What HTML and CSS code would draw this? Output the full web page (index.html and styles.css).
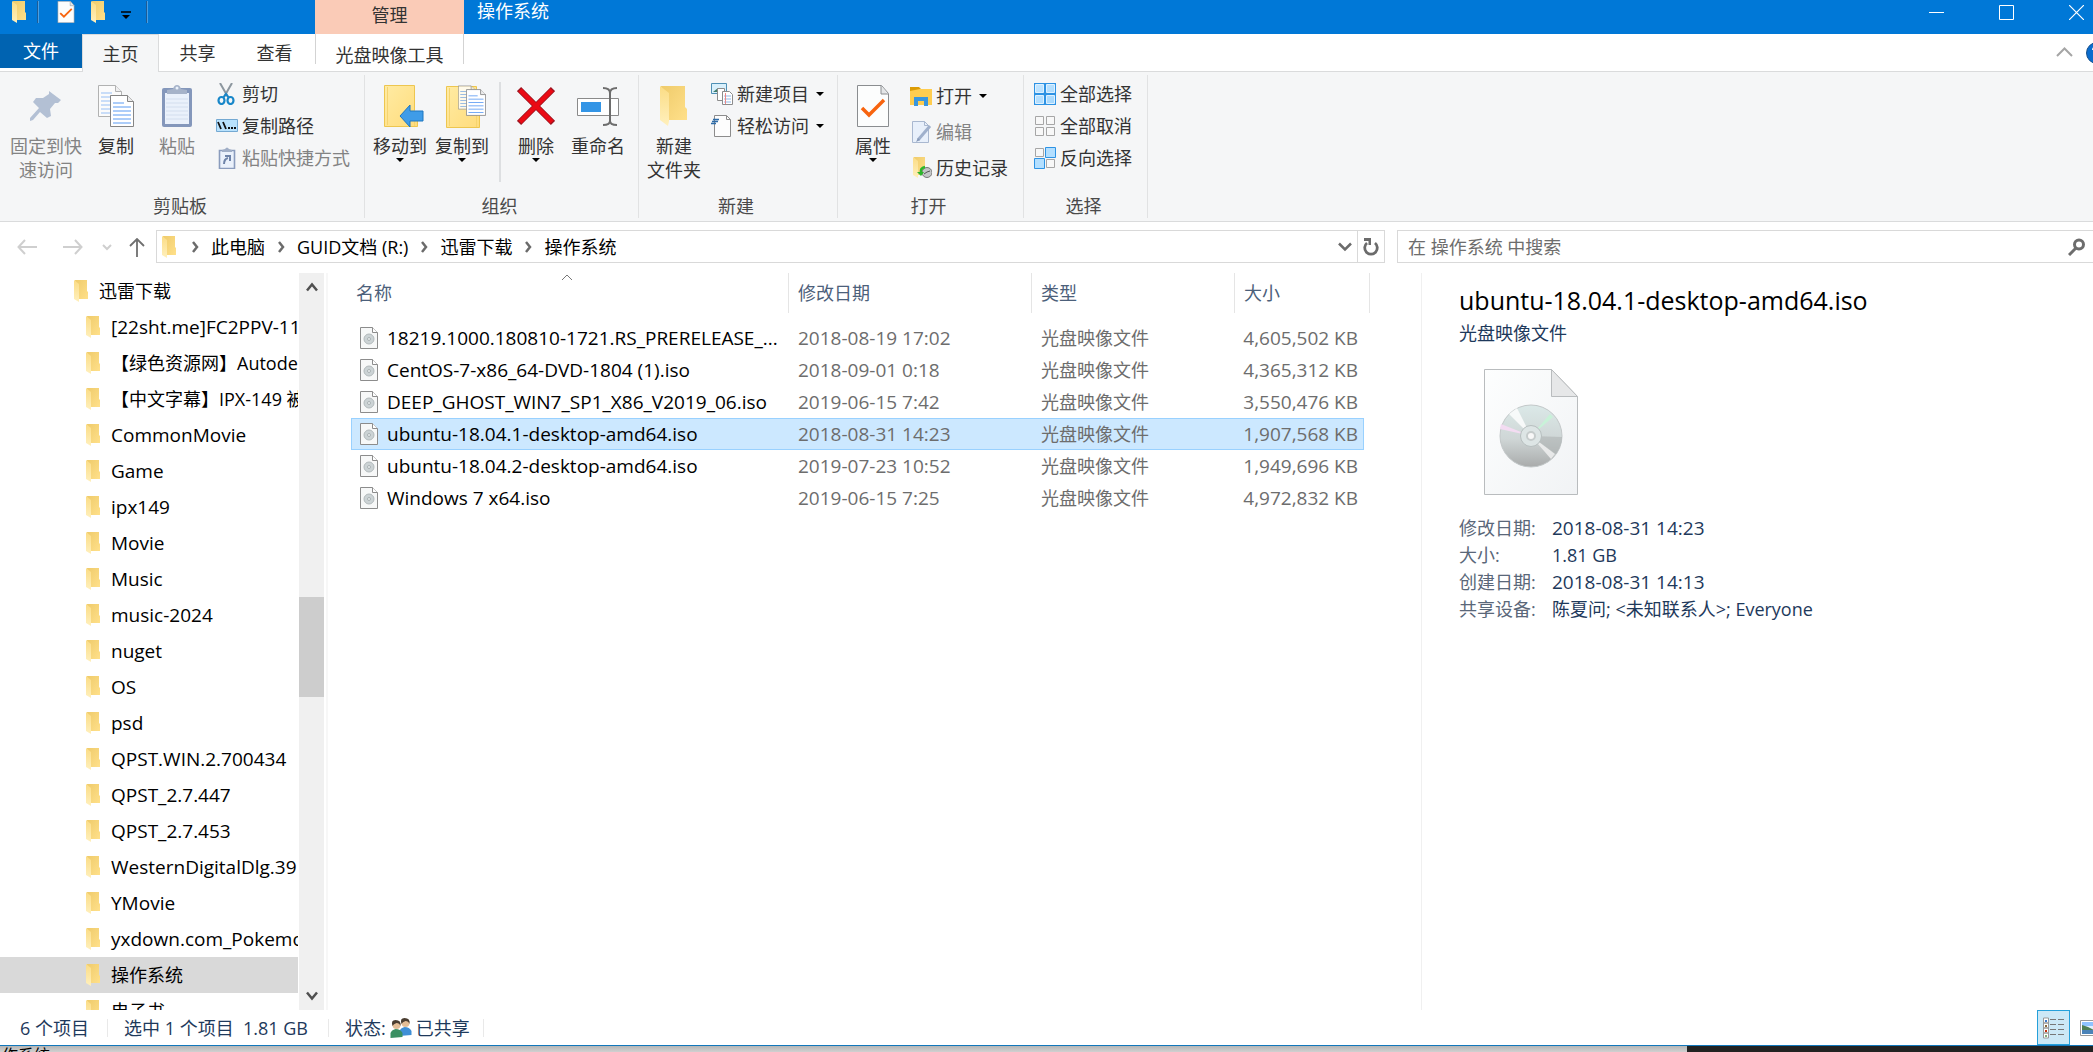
FILE: index.html
```html
<!DOCTYPE html>
<html lang="zh-CN">
<head>
<meta charset="utf-8">
<title>操作系统</title>
<link rel="stylesheet" href="styles.css">
</head>
<body>
<svg class="sprite" aria-hidden="true">
  <defs>
    <linearGradient id="g-back" x1="0" y1="0" x2="1" y2="1"><stop offset="0" stop-color="#efcb6b"/><stop offset="1" stop-color="#ffe08a"/></linearGradient>
    <linearGradient id="g-flap" x1="0" y1="0" x2="0" y2="1"><stop offset="0" stop-color="#fbdc85"/><stop offset="1" stop-color="#fff0bd"/></linearGradient>
    <linearGradient id="g-fold" x1="0" y1="0" x2="1" y2="1"><stop offset="0" stop-color="#ffeba3"/><stop offset="1" stop-color="#ffdc7c"/></linearGradient>
    <linearGradient id="g-page" x1="0" y1="0" x2="1" y2="1"><stop offset="0" stop-color="#fdfefe"/><stop offset="1" stop-color="#f1f3f5"/></linearGradient>
    <linearGradient id="g-disc" x1="0" y1="0" x2="0" y2="1"><stop offset="0" stop-color="#dbe9e8"/><stop offset=".55" stop-color="#cfd6d6"/><stop offset="1" stop-color="#a9abab"/></linearGradient>
    <linearGradient id="g-blue" x1="0" y1="0" x2="1" y2="1"><stop offset="0" stop-color="#c4e6ff"/><stop offset="1" stop-color="#a3d7fd"/></linearGradient>
  </defs>
  <symbol id="folder" viewBox="0 0 14 22"><path d="M1 0h12v11l1 1v7H3z" fill="url(#g-back)"/><path d="M0 0l5 4v18l-5-3z" fill="url(#g-flap)"/></symbol>
  <symbol id="iso" viewBox="0 0 18 22"><path d="M.5.5h12l5 5v16H.5z" fill="#f7f8f8" stroke="#8c8c8c"/><path d="M12.500.5v5h5" fill="#fff" stroke="#8c8c8c"/><circle cx="9" cy="12" r="5" fill="#ccd3d5" stroke="#b3babc"/><circle cx="9" cy="12" r="1.500" fill="#eef1f2" stroke="#aab2b4"/></symbol>
  <symbol id="checkdoc" viewBox="0 0 32 42"><path d="M.5.5h24l7 8v33H.5z" fill="#fcfdfd" stroke="#8a8d90"/><path d="M24 1v8h7" fill="#e4e6e8" stroke="#8a8d90"/><path d="M5 23l7 7L27 15" fill="none" stroke="#f7640f" stroke-width="3.500"/></symbol>
  <symbol id="page" viewBox="0 0 24 32"><path d="M.5.5h17l6 6v25H.5z" fill="#fff" stroke="#858585"/><path d="M17.500.5v6h6" fill="#ececec" stroke="#858585"/><path d="M3 8h11M3 12h18M3 16h18M3 20h18M3 24h18M3 28h18" stroke="#5b9bf3" stroke-width="1"/></symbol>
  <symbol id="pages" viewBox="0 0 36 42"><use href="#page" width="24" height="32" opacity=".6"/><use href="#page" x="12" y="10" width="24" height="32"/></symbol>
  <symbol id="bigfolder" viewBox="0 0 34 42"><path d="M.5.5h30v25l3 3v13H.5z" fill="url(#g-fold)" stroke="#edc650"/><path d="M3.500 2v38M30.500 25v16" stroke="#f5d470" fill="none"/></symbol>
  <symbol id="chev" viewBox="0 0 8 12"><path d="M2 1l4 5-4 5" fill="none" stroke="#6b6b6b" stroke-width="2.500"/></symbol>
  <symbol id="person" viewBox="0 0 12 18"><path d="M0 18v-5q1-3 5-4 5 0 7 4v4z"/><circle cx="6" cy="5" r="4" fill="#e3bd96"/><path d="M2 6Q0 0 5 0q6 0 5 6-1-3-4-3-3 1-4 3z" fill="#4a3d30"/></symbol>
</svg>

<div class="window">
  <header class="titlebar">
    <div class="quick">
      <svg class="i-folder"><use href="#folder"/></svg>
      <span class="qsep"></span>
      <button class="plain q-prop" aria-label="属性"><svg class="i-iso"><use href="#checkdoc"/></svg></button>
      <button class="plain q-new" aria-label="新建文件夹"><svg class="i-folder"><use href="#folder"/></svg></button>
      <button class="plain q-more" aria-label="自定义快速访问工具栏"><svg width="10" height="8" viewBox="0 0 10 8"><path d="M0 1h10" stroke="#000" stroke-width="1.500"/><path d="M1 4h8L5 8z"/></svg></button>
      <span class="qsep"></span>
    </div>
    <div class="context-title">管理</div>
    <h1 class="caption">操作系统</h1>
    <div class="controls">
      <button class="plain" aria-label="最小化"><svg width="15" height="15"><path d="M0 7.500h15" stroke="#fff"/></svg></button>
      <button class="plain" aria-label="最大化"><svg width="15" height="15"><path d="M.5.5h14v14H.5z" fill="none" stroke="#fff"/></svg></button>
      <button class="plain" aria-label="关闭"><svg width="15" height="15"><path d="M0 0l15 15M15 0L0 15" stroke="#fff" stroke-width="1.200"/></svg></button>
    </div>
  </header>

  <nav class="tabs">
    <button class="tab file">文件</button>
    <button class="tab active">主页</button>
    <button class="tab">共享</button>
    <button class="tab">查看</button>
    <button class="tab context">光盘映像工具</button>
    <span class="grow"></span>
    <button class="plain collapse" aria-label="最小化功能区"><svg width="17" height="10" viewBox="0 0 17 10"><path d="M1 9l7.500-7.500L16 9" fill="none" stroke="#a5a5a5" stroke-width="2"/></svg></button>
    <button class="plain help" aria-label="帮助"><svg width="22" height="22"><circle cx="11" cy="11" r="10.500" fill="#0a6cce" stroke="#17508c"/><path d="M7 8q0-3 4-3t4 3q0 2-4 4v2" fill="none" stroke="#fff" stroke-width="2"/></svg></button>
  </nav>

  <section class="ribbon">
    <div class="group g-clip">
      <div class="tools">
        <button class="big pin" disabled><svg width="36" height="42" viewBox="0 0 36 42"><path d="M21 6l12 9-3 3-3 0-5 6 1 7-4 2-7-6L5 35l-3 1 0-3 9-10-6-6 3-4 7 0 6-4z" fill="#b3c0d4"/></svg><span>固定到快<br>速访问</span></button>
        <button class="big copy"><svg width="36" height="42"><use href="#pages"/></svg><span>复制</span></button>
        <button class="big paste" disabled><svg width="30" height="42" viewBox="0 0 30 42"><rect y="3" width="30" height="39" rx="2" fill="#8497bb"/><path d="M3 8h24v31H3z" fill="#eaf1fb"/><path d="M4 14h22M4 18h22M4 22h22M4 26h22M4 30h22M4 34h22" stroke="#d3deee"/><path d="M5 9V5l6-1q1-4 4-4t4 4l6 1v4z" fill="#a6b3c9"/><circle cx="15" cy="3" r="1.500" fill="#eaf1fb"/></svg><span>粘贴</span></button>
        <div class="stack">
          <button class="small"><svg width="22" height="22" viewBox="0 0 22 22"><path d="M4 0l8 14M16 0L8 14" stroke="#8d979f" stroke-width="2" fill="none"/><ellipse cx="5.500" cy="17.500" rx="3" ry="3.500" fill="none" stroke="#1887c9" stroke-width="2.200"/><ellipse cx="14.500" cy="17.500" rx="3" ry="3.500" fill="none" stroke="#1887c9" stroke-width="2.200"/><path d="M7 15l3-4 3 4" fill="none" stroke="#1887c9" stroke-width="2"/></svg>剪切</button>
          <button class="small"><svg width="22" height="22" viewBox="0 0 22 22"><path d="M.5 4.500h21v12H.5z" fill="#b9e2fd" stroke="#74a9d2"/><path d="M2 7l3 7M7 7l3 7" stroke="#111" stroke-width="1.800"/><path d="M12 13h2M15 13h2M18 13h2" stroke="#111" stroke-width="2"/></svg>复制路径</button>
          <button class="small" disabled><svg width="22" height="22" viewBox="0 0 22 22"><path d="M3.500 3.500h15v18h-15z" fill="#eaf1fb" stroke="#8a9cbd" stroke-width="1.600"/><path d="M6 5V3l3-1q2-3 4 0l3 1v2z" fill="#a0aec6"/><path d="M8 17q0-5 4-6M9 9h5v5" fill="none" stroke="#6f84a9" stroke-width="2"/></svg>粘贴快捷方式</button>
        </div>
      </div>
      <h2>剪贴板</h2>
    </div>
    <div class="group g-org">
      <div class="tools">
        <button class="big"><svg width="48" height="44" viewBox="-8 0 48 44"><use href="#bigfolder" y="1" width="34" height="42"/><path d="M16 32l10-11v6h13v10H26v6z" fill="#3f9ce8" stroke="#1f77c0"/></svg><span>移动到</span><i class="caret"></i></button>
        <button class="big"><svg width="48" height="44" viewBox="-8 0 48 44"><use href="#bigfolder" y="2" width="34" height="42"/><use href="#page" x="12" y="0" width="18" height="27" opacity=".8"/><use href="#page" x="20" y="5" width="20" height="27"/></svg><span>复制到</span><i class="caret"></i></button>
        <span class="rule"></span>
        <button class="big"><svg width="38" height="40" viewBox="0 0 38 40"><path d="M2 3l34 34M36 3L2 37" stroke="#9c1420" stroke-width="6"/><path d="M3 4l32 32M35 4L3 36" stroke="#ea0a14" stroke-width="4.500"/></svg><span>删除</span><i class="caret"></i></button>
        <button class="big"><svg width="42" height="42" viewBox="0 0 42 42"><path d="M.5 13.500h41v17H.5z" fill="#fff" stroke="#8a8a8a"/><path d="M4 17h20v10H4z" fill="#3395e6"/><path d="M26 3q7 0 7 5v28q0 4-7 4M40 3q-7 0-7 5M40 40q-7 0-7-4" fill="none" stroke="#6d6d6d" stroke-width="2"/></svg><span>重命名</span></button>
      </div>
      <h2>组织</h2>
    </div>
    <div class="group g-new">
      <div class="tools">
        <button class="big"><svg width="29" height="40" viewBox="0 0 29 40"><path d="M1 0h24v21l2 2v11H7z" fill="url(#g-back)"/><path d="M0 0l9 7v28l-1 5-8-6z" fill="url(#g-flap)"/></svg><span>新建<br>文件夹</span></button>
        <div class="stack">
          <button class="small"><svg width="22" height="22" viewBox="0 0 22 22"><path d="M.5.5h15v10H.5z" fill="#d9f0fc" stroke="#4f90b5"/><path d="M2 9l5-4 6 4z" fill="#3f7f6d"/><path d="M6.500 5.500h7v12h-7z" fill="#fff" stroke="#8c8c8c"/><path d="M11.500 8.500h7l3 3v10h-10z" fill="#fff" stroke="#8c8c8c"/><path d="M13 13h7M13 16h7M13 19h7" stroke="#8fb9e8"/><path d="M14.500 10v11" stroke="#e88"/></svg>新建项目<i class="caret"></i></button>
          <button class="small"><svg width="22" height="22" viewBox="0 0 22 22"><path d="M3.500.5h12l4 4v17h-16z" fill="#fdfdfd" stroke="#8c8c8c"/><path d="M15.500.5v4h4" fill="none" stroke="#8c8c8c"/><path d="M2 4.500h6M1 6.500h6M0 8.500h5" stroke="#2f6ca8" stroke-width="1.300"/></svg>轻松访问<i class="caret"></i></button>
        </div>
      </div>
      <h2>新建</h2>
    </div>
    <div class="group g-open">
      <div class="tools">
        <button class="big"><svg width="32" height="42"><use href="#checkdoc"/></svg><span>属性</span><i class="caret"></i></button>
        <div class="stack tall">
          <button class="small"><svg width="22" height="22" viewBox="0 0 22 22"><path d="M0 2h9l2 2v3H0z" fill="#dc9c05"/><path d="M0 6l10-2h12v16H0z" fill="#ffcd4f"/><path d="M4 21v-9h14v9h-4v-5H8v5z" fill="#3a96dd"/></svg>打开<i class="caret"></i></button>
          <button class="small" disabled><svg width="22" height="22" viewBox="0 0 22 22"><path d="M2.500.5h12l4 4v17h-16z" fill="#e8f0fb" stroke="#a9b8d0"/><path d="M14.500.5v4h4" fill="none" stroke="#a9b8d0"/><path d="M8 19L20 5" stroke="#9fb0cc" stroke-width="3"/><path d="M6 21l2-4 2 2z" fill="#8799b8"/></svg>编辑</button>
          <button class="small"><svg width="22" height="22" viewBox="0 0 22 22"><path d="M4 0h11v18H6z" fill="url(#g-back)"/><path d="M3 0l5 4v17l-5-3z" fill="url(#g-flap)"/><circle cx="17" cy="15.500" r="5" fill="#c3c6c8" stroke="#777"/><path d="M14 17l3-2 3-1" stroke="#555" fill="none"/><path d="M15 10q-5 1-4 6" fill="none" stroke="#2bb52b" stroke-width="2.500"/><path d="M7 15h7l-3 4z" fill="#2bb52b"/></svg>历史记录</button>
        </div>
      </div>
      <h2>打开</h2>
    </div>
    <div class="group g-sel">
      <div class="tools">
        <div class="stack">
          <button class="small"><svg width="22" height="22" viewBox="0 0 22 22"><path d="M0 0h22v22H0z" fill="#2e93e4"/><path d="M1.500 1.500h8v8h-8zM12.500 1.500h8v8h-8zM1.500 12.500h8v8h-8zM12.500 12.500h8v8h-8z" fill="url(#g-blue)" stroke="#dff1ff"/></svg>全部选择</button>
          <button class="small"><svg width="22" height="22" viewBox="0 0 22 22"><path d="M1.500 1.500h8v8h-8zM12.500 1.500h8v8h-8zM1.500 12.500h8v8h-8zM12.500 12.500h8v8h-8z" fill="#f8f8f8" stroke="#a6a6a6"/></svg>全部取消</button>
          <button class="small"><svg width="22" height="22" viewBox="0 0 22 22"><path d="M1.500 1.500h8v8h-8zM12.500 12.500h8v8h-8z" fill="#f8f8f8" stroke="#a6a6a6"/><path d="M11.500.5h10v10h-10zM.5 11.500h10v10H.5z" fill="#b3dfff" stroke="#2e93e4"/></svg>反向选择</button>
        </div>
      </div>
      <h2>选择</h2>
    </div>
  </section>

  <div class="addressbar">
    <div class="history">
      <button class="plain" aria-label="后退" disabled><svg width="20" height="16" viewBox="0 0 20 16"><path d="M8 1L1.500 8 8 15M1.500 8H20" fill="none" stroke="#cfcfcf" stroke-width="2"/></svg></button>
      <button class="plain" aria-label="前进" disabled><svg width="20" height="16" viewBox="0 0 20 16"><path d="M12 1l6.500 7-6.500 7M18.500 8H0" fill="none" stroke="#cfcfcf" stroke-width="2"/></svg></button>
      <button class="plain recent" aria-label="最近浏览的位置" disabled><svg width="10" height="7" viewBox="0 0 10 7"><path d="M1 1l4 4 4-4" fill="none" stroke="#cfcfcf" stroke-width="2"/></svg></button>
      <button class="plain" aria-label="上移"><svg width="16" height="19" viewBox="0 0 16 19"><path d="M1 8l7-7 7 7M8 1v18" fill="none" stroke="#6f6f6f" stroke-width="1.800"/></svg></button>
    </div>
    <div class="path">
      <svg class="i-folder"><use href="#folder"/></svg>
      <svg class="chev"><use href="#chev"/></svg><a href="#">此电脑</a>
      <svg class="chev"><use href="#chev"/></svg><a href="#">GUID文档 (R:)</a>
      <svg class="chev"><use href="#chev"/></svg><a href="#">迅雷下载</a>
      <svg class="chev"><use href="#chev"/></svg><a href="#">操作系统</a>
      <span class="grow"></span>
      <button class="plain drop" aria-label="以前的位置"><svg width="14" height="10" viewBox="0 0 14 10"><path d="M1 1.500l6 6 6-6" fill="none" stroke="#6b6b6b" stroke-width="2.500"/></svg></button>
      <button class="plain refresh" aria-label="刷新"><svg width="16" height="18" viewBox="0 0 16 18"><path d="M4 5A6.300 6.300 0 1 0 12 5" fill="none" stroke="#6b6b6b" stroke-width="2.800"/><path d="M1 0h7v7H5.500V3H1z" fill="#6b6b6b"/></svg></button>
    </div>
    <label class="search"><input type="search" placeholder="在 操作系统 中搜索" aria-label="搜索"><svg width="17" height="18" viewBox="0 0 17 18"><circle cx="11" cy="6.500" r="4.500" fill="none" stroke="#6d6d6d" stroke-width="3"/><path d="M8 10l-7 7" stroke="#6d6d6d" stroke-width="3"/></svg></label>
  </div>

  <div class="main">
    <nav class="tree">
      <ul>
        <li class="root"><a href="#"><svg class="i-folder"><use href="#folder"/></svg>迅雷下载</a></li>
        <li><a href="#"><svg class="i-folder"><use href="#folder"/></svg><span class="latin">[22sht.me]FC2PPV-11</span></a></li>
        <li><a href="#"><svg class="i-folder"><use href="#folder"/></svg>【绿色资源网】Autodesk</a></li>
        <li><a href="#"><svg class="i-folder"><use href="#folder"/></svg>【中文字幕】IPX-149 被</a></li>
        <li><a href="#"><svg class="i-folder"><use href="#folder"/></svg><span class="latin">CommonMovie</span></a></li>
        <li><a href="#"><svg class="i-folder"><use href="#folder"/></svg><span class="latin">Game</span></a></li>
        <li><a href="#"><svg class="i-folder"><use href="#folder"/></svg><span class="latin">ipx149</span></a></li>
        <li><a href="#"><svg class="i-folder"><use href="#folder"/></svg><span class="latin">Movie</span></a></li>
        <li><a href="#"><svg class="i-folder"><use href="#folder"/></svg><span class="latin">Music</span></a></li>
        <li><a href="#"><svg class="i-folder"><use href="#folder"/></svg><span class="latin">music-2024</span></a></li>
        <li><a href="#"><svg class="i-folder"><use href="#folder"/></svg><span class="latin">nuget</span></a></li>
        <li><a href="#"><svg class="i-folder"><use href="#folder"/></svg><span class="latin">OS</span></a></li>
        <li><a href="#"><svg class="i-folder"><use href="#folder"/></svg><span class="latin">psd</span></a></li>
        <li><a href="#"><svg class="i-folder"><use href="#folder"/></svg><span class="latin">QPST.WIN.2.700434</span></a></li>
        <li><a href="#"><svg class="i-folder"><use href="#folder"/></svg><span class="latin">QPST_2.7.447</span></a></li>
        <li><a href="#"><svg class="i-folder"><use href="#folder"/></svg><span class="latin">QPST_2.7.453</span></a></li>
        <li><a href="#"><svg class="i-folder"><use href="#folder"/></svg><span class="latin">WesternDigitalDlg.39</span></a></li>
        <li><a href="#"><svg class="i-folder"><use href="#folder"/></svg><span class="latin">YMovie</span></a></li>
        <li><a href="#"><svg class="i-folder"><use href="#folder"/></svg><span class="latin">yxdown.com_Pokemo</span></a></li>
        <li class="current"><a href="#"><svg class="i-folder"><use href="#folder"/></svg>操作系统</a></li>
        <li><a href="#"><svg class="i-folder"><use href="#folder"/></svg>电子书</a></li>
      </ul>
    </nav>
    <div class="scrollbar">
      <button class="plain" aria-label="向上滚动"><svg width="12" height="10" viewBox="0 0 12 10"><path d="M1 8.500l5-6 5 6" fill="none" stroke="#505050" stroke-width="2.500"/></svg></button>
      <div class="track"><span class="before"></span><span class="thumb"></span><span class="after"></span></div>
      <button class="plain" aria-label="向下滚动"><svg width="12" height="10" viewBox="0 0 12 10"><path d="M1 1.500l5 6 5-6" fill="none" stroke="#505050" stroke-width="2.500"/></svg></button>
    </div>
    <section class="files">
      <table>
        <colgroup><col class="c-name"><col class="c-date"><col class="c-type"><col class="c-size"></colgroup>
        <thead>
          <tr>
            <th><button>名称</button><svg class="sorted" width="12" height="7" viewBox="0 0 12 7"><path d="M1 6l5-5 5 5" fill="none" stroke="#777"/></svg></th>
            <th><button>修改日期</button></th><th><button>类型</button></th><th class="last"><button>大小</button></th>
          </tr>
        </thead>
        <tbody>
          <tr><td><svg class="i-iso"><use href="#iso"/></svg>18219.1000.180810-1721.RS_PRERELEASE_...</td><td>2018-08-19 17:02</td><td>光盘映像文件</td><td>4,605,502 KB</td></tr>
          <tr><td><svg class="i-iso"><use href="#iso"/></svg>CentOS-7-x86_64-DVD-1804 (1).iso</td><td>2018-09-01 0:18</td><td>光盘映像文件</td><td>4,365,312 KB</td></tr>
          <tr><td><svg class="i-iso"><use href="#iso"/></svg>DEEP_GHOST_WIN7_SP1_X86_V2019_06.iso</td><td>2019-06-15 7:42</td><td>光盘映像文件</td><td>3,550,476 KB</td></tr>
          <tr class="selected"><td><svg class="i-iso"><use href="#iso"/></svg>ubuntu-18.04.1-desktop-amd64.iso</td><td>2018-08-31 14:23</td><td>光盘映像文件</td><td>1,907,568 KB</td></tr>
          <tr><td><svg class="i-iso"><use href="#iso"/></svg>ubuntu-18.04.2-desktop-amd64.iso</td><td>2019-07-23 10:52</td><td>光盘映像文件</td><td>1,949,696 KB</td></tr>
          <tr><td><svg class="i-iso"><use href="#iso"/></svg>Windows 7 x64.iso</td><td>2019-06-15 7:25</td><td>光盘映像文件</td><td>4,972,832 KB</td></tr>
        </tbody>
      </table>
    </section>
    <aside class="preview">
      <h2>ubuntu-18.04.1-desktop-amd64.iso</h2>
      <p>光盘映像文件</p>
      <svg class="art" width="96" height="128" viewBox="0 0 96 128">
        <path d="M1.500 1.500h67l26 27v98h-93z" fill="url(#g-page)" stroke="#b9bcbe"/>
        <path d="M68.500 1.500v27h26z" fill="#e6e7e8" stroke="#b9bcbe"/>
        <circle cx="48" cy="68" r="31" fill="url(#g-disc)" stroke="#c3c8c9"/>
        <path d="M48 68L26 46l8-6z" fill="#fff" opacity=".8"/>
        <path d="M48 68L17 61l1-5z" fill="#f3dcf2"/>
        <path d="M48 68l19-22 3 3z" fill="#c8f2d8"/>
        <path d="M48 68l24 18-4 5z" fill="#f2f2f2" opacity=".8"/>
        <path d="M48 68l31 1a31 31 0 0 1-6 17z" fill="#aeb3b3" opacity=".6"/>
        <circle cx="48" cy="68" r="10.500" fill="#dde5e5" stroke="#b7bfbf"/>
        <circle cx="48" cy="68" r="4" fill="#f8f8f8" stroke="#c6cccc" stroke-width="2"/>
      </svg>
      <dl>
        <dt>修改日期:</dt><dd class="latin">2018-08-31 14:23</dd>
        <dt>大小:</dt><dd>1.81 GB</dd>
        <dt>创建日期:</dt><dd class="latin">2018-08-31 14:13</dd>
        <dt>共享设备:</dt><dd>陈夏问; &lt;未知联系人&gt;; Everyone</dd>
      </dl>
    </aside>
  </div>

  <footer class="status">
    <span class="s-count">6 个项目</span>
    <span class="s-sel">选中 1 个项目&nbsp; 1.81 GB</span>
    <span class="s-share">状态:<svg width="22" height="20" viewBox="0 0 22 20"><use href="#person" x="9" y="0" width="13" height="18" fill="#3f8fd6"/><use href="#person" x="0" y="2" width="13" height="18" fill="#3a8f62"/></svg>已共享</span>
    <span class="grow"></span>
    <button class="plain view on" aria-label="详细信息"><svg width="22" height="22" viewBox="0 0 22 22"><path d="M.5 1h5v5h-5zM.5 6h5v5h-5zM.5 11h5v5h-5zM.5 16h5v5h-5z" fill="#fff" stroke="#999"/><path d="M2 3h2v2H2z" fill="#3c78c8"/><path d="M2 8h2v2H2z" fill="#8a6a3c"/><path d="M2 13h2v2H2z" fill="#c33010"/><path d="M2 18h2v2H2z" fill="#7faf7a"/><path d="M7 2.500h6M15 2.500h6M7 7.500h6M15 7.500h6M7 12.500h6M15 12.500h6M7 17.500h6M15 17.500h6" stroke="#777"/></svg></button>
    <button class="plain view" aria-label="大缩略图"><svg width="22" height="16" viewBox="0 0 22 16"><path d="M.5.5h21v15H.5z" fill="#fff" stroke="#999"/><path d="M2 2h18v6H2z" fill="#8fc3ff"/><path d="M4 6h16v3H4z" fill="#e2f1ff"/><path d="M2 5l6 2 6 3H2z" fill="#4f7f53"/><path d="M2 10h18v4H2z" fill="#4a83b8"/></svg></button>
  </footer>
</div>
<div class="behind"><div class="behind-light">作系统</div></div>
</body>
</html>
```
FILE: styles.css
```css
* { box-sizing: border-box; }
body {
  margin: 0;
  height: 100vh;
  overflow: hidden;
  display: flex;
  flex-direction: column;
  font: 18px/24px "Open Sans", "Noto Sans CJK SC", sans-serif;
  color: #000;
  background: #222;
}
button, input { font: inherit; color: inherit; }
h1, h2, p, ul, dl, dd { margin: 0; padding: 0; font: inherit; }
a { color: inherit; text-decoration: none; }
svg { display: block; flex: none; }
.sprite { position: absolute; width: 0; height: 0; }
.plain { border: 0; padding: 0; background: none; display: flex; align-items: center; justify-content: center; }
.grow { flex: 1; }
.latin { font-size: 19px; }
.i-folder { width: 14px; height: 22px; }
.i-iso { width: 18px; height: 22px; }

/* The window runs a little past the right edge of the screen */
.window {
  flex: 1;
  min-height: 0;
  width: calc(100% + 18px);
  display: flex;
  flex-direction: column;
  background: #fff;
  border-bottom: 1px solid #1177bb;
}

.titlebar { height: 34px; display: flex; background: #0078d7; }
.quick { width: 315px; height: 24px; padding-left: 12px; display: flex; align-items: center; }
.qsep { width: 2px; height: 22px; margin: 0 12px 0 11px; background: #1d5c96; border-right: 1px solid #4aa0e4; }
.qsep + .q-prop { margin-left: 6px; }
.q-new { margin-left: 16px; }
.q-more { margin: 6px 4px 0 16px; }
.context-title { width: 149px; background: #facbb7; color: #333; text-align: center; line-height: 30px; }
.caption { flex: 1; padding-left: 13px; color: #fff; line-height: 22px; }
.controls { display: flex; }
.controls button { width: 70px; height: 24px; }

.tabs { height: 38px; display: flex; box-shadow: inset 0 -1px #dadbdc; }
.tab { width: 77px; border: 0; padding: 0; background: none; color: #333; line-height: 34px; }
.tab.file { width: 82px; height: 34px; background: #0063b1; color: #fff; }
.tab.active { background: #f5f6f7; border: 1px solid #dadbdc; border-bottom: 0; }
.tab.context { width: 149px; margin: 0 0 8px 2px; border: solid #d3d3d3; border-width: 0 1px; line-height: 30px; padding-top: 6px; }
.collapse { width: 40px; margin-top: -2px; }
.help { width: 26px; margin-right: 1px; }

.ribbon { height: 150px; display: flex; padding: 3px 0; background: #f5f6f7; border-bottom: 1px solid #dadbdc; color: #333; }
.group { display: flex; flex-direction: column; padding-top: 3px; border-right: 1px solid #e1e2e3; }
.group h2 { padding-right: 4px; text-align: center; color: #4a4a4a; }
.g-clip { width: 365px; }
.g-org { width: 274px; }
.g-new { width: 199px; }
.g-open { width: 186px; }
.g-sel { width: 124px; }
.tools { flex: 1; display: flex; padding-left: 4px; }
.big { width: 62px; padding: 6px 0 0; border: 0; background: none; display: flex; flex-direction: column; align-items: center; white-space: nowrap; }
.big svg { height: 44px; margin-bottom: 6px; }
.big.pin { width: 84px; }
.big.copy { width: 56px; }
.big.paste { width: 66px; }
button:disabled { color: #838383; }
.caret { width: 8px; border: 4px solid transparent; border-top-color: #000; border-bottom: 0; }
.rule { width: 2px; height: 100px; margin: 4px 4px 0 6px; background: #dddfe1; }
.stack { padding-left: 6px; display: flex; flex-direction: column; }
.small { height: 32px; padding: 0; border: 0; background: none; display: flex; align-items: center; gap: 4px; white-space: nowrap; }
.small .caret { margin-left: 3px; }
.tall .small { height: 36px; }

.addressbar { height: 51px; padding-top: 8px; display: flex; }
.history { width: 156px; height: 34px; padding-left: 17px; display: flex; }
.history button { margin-right: 26px; }
.history button:nth-child(2) { margin-right: 19px; }
.history .recent { margin-right: 17px; }
.path { flex: 1; height: 33px; padding-left: 5px; display: flex; align-items: center; border: 1px solid #d9d9d9; }
.path .chev { width: 8px; height: 12px; margin: 0 12px; }
.path .i-folder + .chev { margin-left: 15px; }
.drop { width: 24px; }
.refresh { width: 27px; height: 31px; border-left: 1px solid #d9d9d9; }
.search { width: 714px; height: 33px; margin-left: 12px; padding: 0 25px 0 10px; display: flex; align-items: center; border: 1px solid #d9d9d9; }
.search input { flex: 1; border: 0; padding: 0; outline: 0; background: none; }
.search input::placeholder { color: #6d6d6d; opacity: 1; }

.main { flex: 1; min-height: 0; display: flex; }
.tree { width: 298px; overflow: hidden; }
.tree ul { list-style: none; }
.tree a { height: 36px; padding-left: 86px; display: flex; align-items: center; gap: 11px; white-space: nowrap; }
.tree .root a { padding-left: 74px; }
.tree .current { background: #d9d9d9; }
.scrollbar { width: 25px; margin: 0 2px 0 1px; display: flex; flex-direction: column; background: #f0f0f0; }
.scrollbar button { height: 28px; }
.track { flex: 1; display: flex; flex-direction: column; }
.before { flex: 51; }
.after { flex: 49; }
.thumb { height: 100px; background: #cdcdcd; }

.files { flex: 1; padding-left: 23px; border-left: 2px solid #f7f7f7; }
table { table-layout: fixed; width: 1013px; border-spacing: 0; }
.c-name { width: 438px; }
.c-date { width: 243px; }
.c-type { width: 203px; }
th { position: relative; height: 49px; padding: 0; vertical-align: top; font-weight: 400; }
th button { width: 100%; height: 40px; padding: 0 0 0 9px; border: 0; border-right: 1px solid #e5e5e5; background: none; color: #4c607a; text-align: left; }
th:first-child button { padding-left: 5px; }
th.last button { width: calc(100% + 6px); }
.sorted { position: absolute; top: 1px; left: 210px; }
td { height: 32px; padding: 0 0 0 9px; color: #6d6d6d; font-size: 19px; white-space: nowrap; }
td:first-child { display: flex; align-items: center; gap: 9px; color: #000; }
td:nth-child(3) { font-size: 18px; }
td:last-child { padding: 0 6px 0 0; text-align: right; }
.selected { background: #cce8ff; outline: 1px solid #99d1ff; outline-offset: -1px; }

.preview { width: 690px; padding: 10px 0 0 37px; border-left: 1px solid #f0f0f0; color: #1e395b; }
.preview h2 { font-size: 25px; line-height: 34px; color: #000; }
.preview p { margin-top: 4px; }
.art { margin: 23px 0 19px 24px; }
dl { display: grid; grid-template-columns: 93px 1fr; }
dt, dd { line-height: 27px; }
dt { color: #5a6779; }

.status { height: 35px; padding-left: 20px; display: flex; align-items: center; color: #1e395b; white-space: nowrap; }
.status > span:not(.grow) { height: 18px; line-height: 18px; margin-right: 16px; border-right: 1px solid #e9e9e9; display: flex; align-items: center; }
.s-count { width: 88px; }
.s-sel { width: 205px; }
.s-share { width: 139px; gap: 4px; }
.view { width: 33px; height: 35px; }
.view.on { background: #cce8f6; border: 1px solid #26a0da; }
.view:last-child { width: 41px; }

.behind { height: 6px; overflow: hidden; }
.behind-light { width: 80.6%; height: 6px; padding-left: 2px; font-size: 16px; line-height: 18px; background: linear-gradient(#b5b5b5, #d0d0d0); }
```
